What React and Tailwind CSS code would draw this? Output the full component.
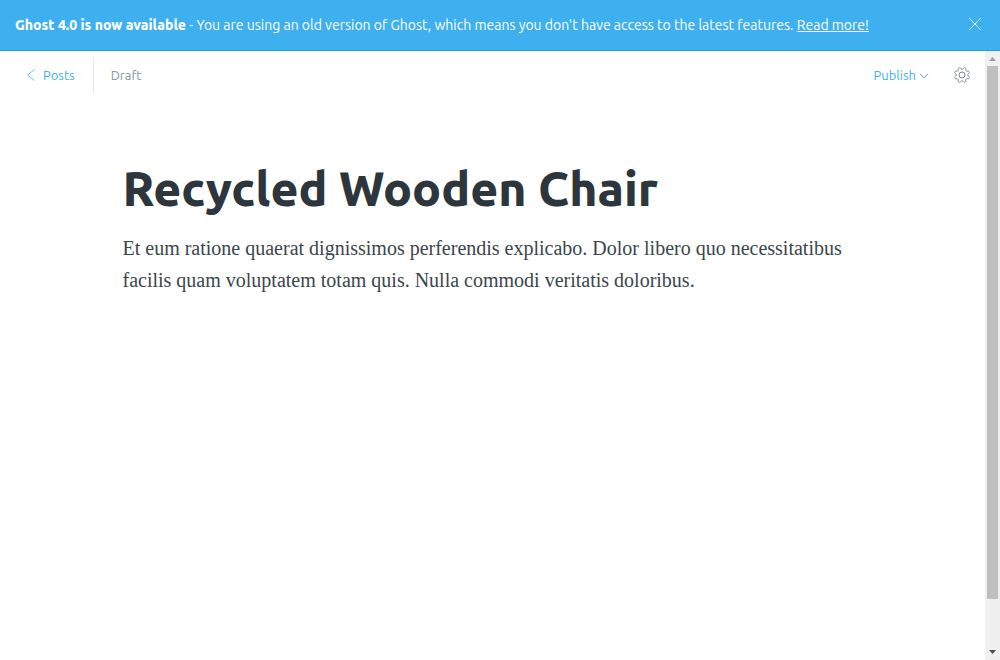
import { useState } from "react";

const TEETH = 8;

// Closed outline of a cog with softly rounded teeth, centred in a 16x16 box.
function cogOutline() {
  const points = [];
  for (let i = 0; i < 160; i++) {
    const a = (i / 160) * Math.PI * 2;
    const wave = -Math.cos(a * TEETH);
    const r = 6.8 + 1.0 * Math.tanh(wave * 2);
    points.push(`${(8 + r * Math.cos(a)).toFixed(2)} ${(8 + r * Math.sin(a)).toFixed(2)}`);
  }
  return `M${points.join("L")}Z`;
}

const COG = cogOutline();

function Banner({ onClose }) {
  return (
    <aside className="flex shrink-0 items-start justify-between border-b border-[#1a9bec] bg-[#3eb0ef] pt-2 pr-4 pb-2 pl-[15px] text-white">
      <p className="text-sm leading-[34px]">
        <b className="font-extrabold">Ghost 4.0 is now available</b> - You are using an old version of
        Ghost, which means you don't have access to the latest features.{" "}
        <a href="#upgrade" className="underline">
          Read more!
        </a>
      </p>
      <button type="button" aria-label="Close" onClick={onClose} className="px-[3px] py-2.5">
        <svg viewBox="0 0 12 12" className="size-3" fill="none" stroke="currentColor" strokeWidth="0.8">
          <path d="M0 0L12 12M12 0L0 12" />
        </svg>
      </button>
    </aside>
  );
}

function EditorHeader() {
  return (
    <header className="flex items-center justify-between pt-1.5 pr-[15px] pl-[26px] text-[13px] leading-9">
      <div className="flex items-center">
        <a href="#posts" className="flex items-center gap-[7px] border-r border-[#dfe9ef] pr-[18px] text-[#3eb0ef]">
          <svg viewBox="0 0 10 12" className="h-3 w-2.5" fill="none" stroke="currentColor" strokeWidth="0.8">
            <path d="M8.500 0.500L1.500 6L8.500 11.500" />
          </svg>
          Posts
        </a>
        <span className="pl-[17px] text-[#8598a2]">Draft</span>
      </div>
      <div className="flex items-center gap-[25px]">
        <button type="button" className="flex items-center gap-[3px] text-[#3eb0ef]">
          Publish
          <svg viewBox="0 0 10 6" className="mt-0.5 h-1.5 w-2.5" fill="none" stroke="#5f7b8b" strokeWidth="0.9">
            <path d="M1 0.800L5 4.800L9 0.800" />
          </svg>
        </button>
        <button type="button" aria-label="Settings" className="text-[#738a94]">
          <svg viewBox="0 0 16 16" className="size-4" fill="none" stroke="currentColor" strokeWidth="1">
            <path d={COG} />
            <circle cx="8" cy="8" r="3" />
          </svg>
        </button>
      </div>
    </header>
  );
}

function ScrollTrack() {
  return (
    <div aria-hidden="true" className="flex w-[15px] shrink-0 flex-col items-center bg-[#f0f0f0]">
      <svg viewBox="0 0 15 15" className="size-[15px] shrink-0 fill-[#a0a0a0]">
        <path d="M4 10L7.500 6L11 10Z" />
      </svg>
      <div className="flex w-full flex-1 flex-col items-center">
        <div className="h-[92%] w-[11px] bg-[#bfbfbf]" />
      </div>
      <svg viewBox="0 0 15 15" className="size-[15px] shrink-0 fill-[#4f4f4f]">
        <path d="M4 5L7.500 9L11 5Z" />
      </svg>
    </div>
  );
}

export default function App() {
  const [showBanner, setShowBanner] = useState(true);
  const [title, setTitle] = useState("Recycled Wooden Chair");

  return (
    <div className="flex h-screen flex-col bg-white font-['Ubuntu','Noto_Sans',sans-serif]">
      {showBanner && <Banner onClose={() => setShowBanner(false)} />}
      <div className="flex min-h-0 flex-1">
        <div className="min-w-0 flex-1">
          <EditorHeader />
          <main className="mx-auto w-full max-w-[740px] pt-16">
            <input
              aria-label="Post title"
              value={title}
              onChange={(e) => setTitle(e.target.value)}
              className="block h-[62px] w-full text-5xl font-extrabold text-[#2c363c] outline-none"
            />
            <div
              role="textbox"
              aria-label="Post content"
              aria-multiline="true"
              contentEditable
              suppressContentEditableWarning
              className="mt-[13px] font-['Liberation_Serif',serif] text-xl leading-8 text-[#3a464c] outline-none"
            >
              <p>
                Et eum ratione quaerat dignissimos perferendis explicabo. Dolor libero quo
                necessitatibus facilis quam voluptatem totam quis. Nulla commodi veritatis doloribus.
              </p>
            </div>
          </main>
        </div>
        <ScrollTrack />
      </div>
    </div>
  );
}
